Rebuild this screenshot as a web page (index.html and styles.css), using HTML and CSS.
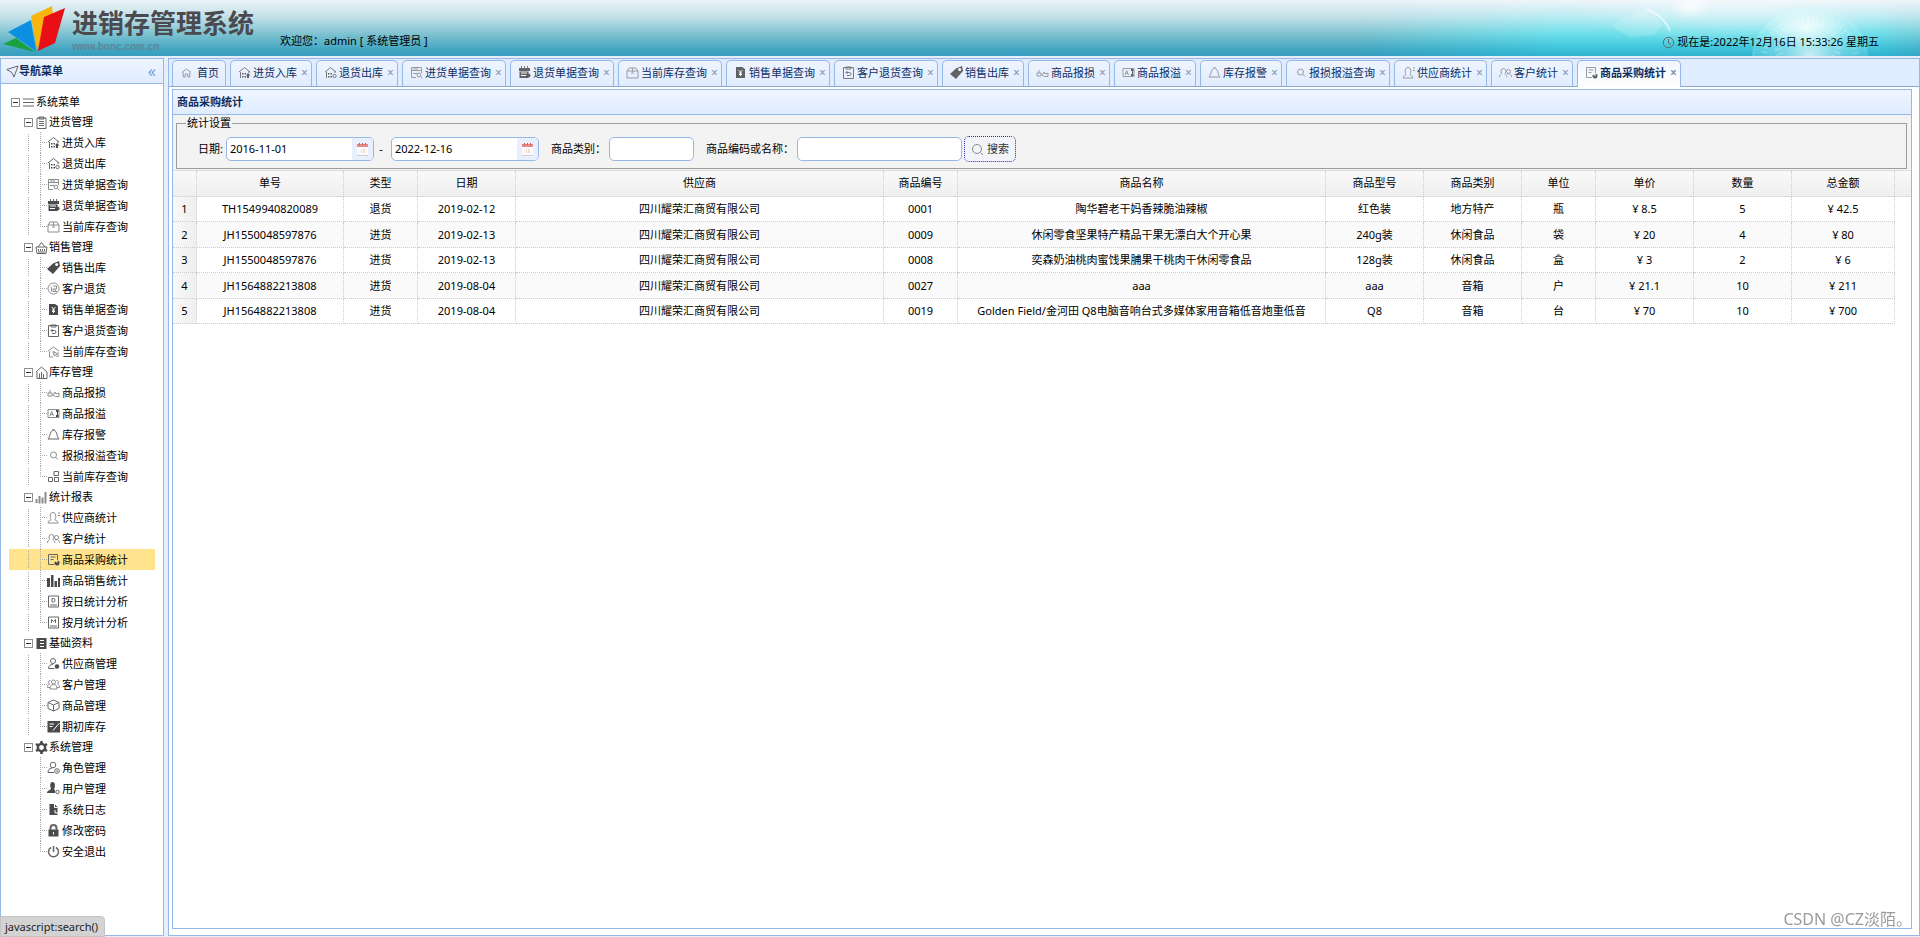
FILE: index.html
```html
<!DOCTYPE html>
<html lang="zh-CN">
<head>
<meta charset="utf-8">
<title>进销存管理系统</title>
<link rel="stylesheet" href="styles.css">
</head>
<body>
<svg class="sprite" aria-hidden="true">
  <symbol id="menu" viewBox="0 0 13 13"><path d="M1 3h11M1 6.500h11M1 10h11"/></symbol>
  <symbol id="clip" viewBox="0 0 13 13"><path d="M2 2h9v10.500H2zM4 1h5v2H4zM4 5.500h5M4 7.500h5M4 9.500h5"/></symbol>
  <symbol id="depot-in" viewBox="0 0 13 13"><path d="M1 6l5.500-4.500L12 6M2.500 6v6M11 5v2"/><path d="M4 7h1.500v1.500H4zM4 10h1.500v1.500H4zM6.500 7H8v1.500H6.500zM6.500 10H8v1.500H6.500zM10 7l2.500 2.500H11V12H9V9.500H8z" class="f"/></symbol>
  <symbol id="depot-out" viewBox="0 0 13 13"><path d="M1 6l5.500-4.500L12 6M2.500 6v6M11 5v2"/><path d="M4 7h1.500v1.500H4zM4 10h1.500v1.500H4zM6.500 7H8v1.500H6.500zM6.500 10H8v1.500H6.500z" class="f"/><circle cx="10.500" cy="10" r="1.700"/></symbol>
  <symbol id="doc-find" viewBox="0 0 13 13"><path d="M6 11.500H1.500v-10h10V7M1.500 4.500h10M3 3h5M3 7.500h4"/><circle cx="9" cy="9" r="1.900"/><path d="M10.500 10.500l2 2"/></symbol>
  <symbol id="cal" viewBox="0 0 13 13"><path d="M1 2h11v3H1zM1.500 5.500h9v6.500h-9z" class="f"/><path d="M3.500 0v3M6.500 0v3M9.500 0v3"/><path d="M3 7h6M3 9.500h5" class="w"/><circle cx="10.500" cy="9.500" r="2" class="f"/></symbol>
  <symbol id="box" viewBox="0 0 13 13"><path d="M1 5l2-3h7l2 3v7H1zM1 5h11M6.500 2v4M5 7h3"/></symbol>
  <symbol id="sale" viewBox="0 0 13 13"><path d="M1 6h11l-1 6.500H2zM3 6l3.500-4.500L10 6M3.500 8v2M5.500 8v2M7.500 8v2M9.500 8v2M3 11h7"/></symbol>
  <symbol id="tag" viewBox="0 0 13 13"><path d="M6 2.500L12 0l1 5-7 8-6-5z" class="f"/><circle cx="9.700" cy="3.500" r="1.500" class="h"/></symbol>
  <symbol id="refund" viewBox="0 0 13 13"><circle cx="6.500" cy="6.500" r="5.500"/><path d="M3.500 4.500l1 1v4M6 4h3.500v3H6v2.500h4M7.500 7l1.500 2"/></symbol>
  <symbol id="yen" viewBox="0 0 13 13"><path d="M2 1h6l3 2v9H2z" class="f"/><path d="M4.500 4l2 2 2-2M6.500 6v4M5 7h3M5 8.500h3" class="w"/></symbol>
  <symbol id="clip-back" viewBox="0 0 13 13"><path d="M1.500 1.500h10v11h-10zM4 1h5v2H4zM5.500 5L4 6.500 5.500 8M4 6.500h3.500a1.500 1.500 0 0 1 0 3H5"/></symbol>
  <symbol id="house-find" viewBox="0 0 13 13"><path d="M1 6l5.500-4L12 6M2.500 6.500V12H6M11 7v5M5 7h3"/><circle cx="8" cy="9" r="1.500"/><path d="M9 10.500l1.500 1.500"/></symbol>
  <symbol id="house" viewBox="0 0 13 13"><path d="M1 6l5.500-5L12 6v6.500H2V6M4.500 12V7.500M6.500 12V6M8.500 12V8"/></symbol>
  <symbol id="home" viewBox="0 0 13 13"><path d="M2 6.500L6.500 3 11 6.500M3.200 6.500V11h2V8h2.600v3h2V6.500"/></symbol>
  <symbol id="loss" viewBox="0 0 13 13"><path d="M1 7h4v3H1zM3 7V4M6 9l2-3 1 2 3-1v3.500H8.500z"/></symbol>
  <symbol id="over" viewBox="0 0 13 13"><path d="M1 2.500h11v8H1zM3 9l1.700-4.500L6.500 9M3.700 7.500h2"/><path d="M9 3h2.500v2H9zM9 8h2.500v2H9zM10 5h1v3h-1z" class="f"/></symbol>
  <symbol id="bell" viewBox="0 0 13 13"><path d="M1 11c2-2 1.500-4.500 3-7 .5-1 1-1.500 2.500-1.500S8.500 3 9 4c1.500 2.500 1 5 3 7zM5.500 2l1-1 1 1"/></symbol>
  <symbol id="find" viewBox="0 0 13 13"><circle cx="6.500" cy="6" r="3"/><path d="M8.700 8.200l2.300 2.300"/></symbol>
  <symbol id="blocks" viewBox="0 0 13 13"><path d="M1.500 7.500h4v4h-4zM7.500 7.500h4v4h-4zM7 1.500h4.500v4H7z"/></symbol>
  <symbol id="chart" viewBox="0 0 13 13"><path d="M1.500 8v4M4.500 5v7.500M7.500 6.500v6M10.500 1v11.500" class="t"/></symbol>
  <symbol id="supply" viewBox="0 0 13 13"><path d="M1 12c0-3 3-2 3-3.500C2.500 6 3 1.500 6 1.500S9.500 6 8 8.500C8 10 11 9 11 12zM11 2h2M11 4.500h2"/></symbol>
  <symbol id="people" viewBox="0 0 13 13"><path d="M.5 11c0-3 2-2.500 2-3.500C1.500 5 2 2.500 4.500 2.500S7.500 5 6 7.500c0 1 1.500 1 2 3.500"/><circle cx="9.500" cy="5.500" r="2"/><path d="M8 8c3-1 4.500.5 4.500 3"/></symbol>
  <symbol id="doc-chart" viewBox="0 0 13 13"><path d="M7 11.500H1.500v-10h9V7M3.500 4h5M3.500 6.500h3"/><path d="M8 8.500a2.500 2.500 0 1 0 2.500-1v2.500z" class="f"/></symbol>
  <symbol id="bars" viewBox="0 0 13 13"><path d="M0 4h3v9H0zM4 1h2.500v12H4zM7.500 7H10v6H7.500zM11 4h2v9h-2z" class="f"/></symbol>
  <symbol id="day" viewBox="0 0 13 13"><path d="M1.500 1h10v11h-10zM3 10h7M5 3.500h1.500Q8 3.500 8 5.200 8 7 6.500 7H5z"/></symbol>
  <symbol id="month" viewBox="0 0 13 13"><path d="M1.500 1h10v11h-10zM3 10h7M4.500 7V3.500l2 2 2-2V7"/></symbol>
  <symbol id="base" viewBox="0 0 13 13"><path d="M1.500 1h10v11h-10z" class="f"/><path d="M5 3.500h4M5 6.500h4M5 9.500h4" class="w"/></symbol>
  <symbol id="user-plus" viewBox="0 0 13 13"><circle cx="6" cy="4" r="2.500"/><path d="M1.500 11.500c0-3 2-4 4.500-4M1.500 11.500h6"/><circle cx="10" cy="9.500" r="2.200" class="f"/></symbol>
  <symbol id="group" viewBox="0 0 13 13"><circle cx="6.500" cy="4" r="2"/><path d="M3 11c0-3 1-4.500 3.500-4.500S10 8 10 11zM3.500 2.500C1.500 2 1 5 2.500 6 .5 7 .5 8 .5 9.500H3M9.500 2.500c2-.5 2.500 2.500 1 3.500 2 1 2 2 2 3.500H10"/></symbol>
  <symbol id="cube" viewBox="0 0 13 13"><path d="M6.500 1L12 3.500v6L6.500 12 1 9.500v-6zM1 3.500L6.500 6 12 3.500M6.500 6v6"/></symbol>
  <symbol id="note" viewBox="0 0 13 13"><path d="M.5 1H13v11.500H.5z" class="f"/><path d="M2.500 4H7M2.500 6.500h3M12.500 3L6 10.500" class="w"/></symbol>
  <symbol id="gear" viewBox="0 0 13 13"><path d="M6.500 2.500l3.500 2v4l-3.500 2-3.500-2v-4z" class="g"/><path d="M6.500 0v3M6.500 10v3M1 3l2.500 1.500M9.500 8.500L12 10M12 3L9.500 4.500M3.500 8.500L1 10" class="g"/></symbol>
  <symbol id="role" viewBox="0 0 13 13"><circle cx="6" cy="4" r="2.800"/><path d="M7 11.500H1C1 9 2 7.500 5 7"/><circle cx="10" cy="10" r="2.300"/><path d="M9 10h2"/></symbol>
  <symbol id="user" viewBox="0 0 13 13"><path d="M5.500 0C2.500 0 3 5 4 6.500 4 8 0 8 0 11h8V8.500L7 7c1.500-2 1.500-7-1.500-7z" class="f"/><circle cx="10.500" cy="10" r="1.700"/></symbol>
  <symbol id="log" viewBox="0 0 13 13"><path d="M2.500 1h5l3 3v8h-8z" class="f"/><path d="M7.500 1v3.500h3M8 7v3h3" class="w"/></symbol>
  <symbol id="lock" viewBox="0 0 13 13"><path d="M1.500 5.500h10v7h-10z" class="f"/><path d="M3.500 6V4a3 3 0 0 1 6 0v2" class="t"/><path d="M6.500 8v2.500" class="w"/></symbol>
  <symbol id="power" viewBox="0 0 13 13"><path d="M4 2.500a5 5 0 1 0 5 0M6.500 1v6" class="p"/></symbol>
  <symbol id="plane" viewBox="0 0 13 13"><path d="M.8 4.500L12 1 8 12 5.800 7.500z"/></symbol>
  <symbol id="clock" viewBox="0 0 13 13"><circle cx="6.500" cy="6.500" r="5.200"/><path d="M6.500 3v4L9 8.500"/></symbol>
  <symbol id="datebox" viewBox="0 0 13 13"><path d="M1 4h11v8H1z" fill="#fbfbfd"/><path d="M1 12h11v1H1z" fill="#cfcfda"/><path d="M1 1h11v3H1z" fill="#e58a88"/><path d="M3 0h1v2H3zM6 0h1v2H6zM9 0h1v2H9z" fill="#c9504e"/><path d="M5 6h1v4H5zM7 6h2v4H7z" fill="#f6dcc8"/></symbol>
</svg>

<header class="top">
  <svg class="top-art" viewBox="0 0 480 56" preserveAspectRatio="none" aria-hidden="true">
    <defs>
      <radialGradient id="globe"><stop offset="0" stop-color="#fff" stop-opacity=".75"/><stop offset=".5" stop-color="#dff" stop-opacity=".35"/><stop offset="1" stop-color="#bff" stop-opacity=".15"/></radialGradient>
      <radialGradient id="glow"><stop offset="0" stop-color="#fff" stop-opacity=".8"/><stop offset="1" stop-color="#fff" stop-opacity="0"/></radialGradient>
    </defs>
    <ellipse cx="300" cy="10" rx="170" ry="34" fill="url(#glow)" opacity=".5"/>
    <ellipse cx="370" cy="56" rx="58" ry="49" fill="url(#globe)"/>
    <ellipse cx="366" cy="28" rx="42" ry="20" fill="url(#glow)"/>
    <ellipse cx="370" cy="56" rx="56" ry="47" fill="none" stroke="#fff" stroke-opacity=".2" stroke-width="3" stroke-dasharray="1 2"/>
    <ellipse cx="370" cy="56" rx="46" ry="38" fill="none" stroke="#fff" stroke-opacity=".18" stroke-width="6" stroke-dasharray="2 3"/>
    <ellipse cx="368" cy="46" rx="30" ry="24" fill="none" stroke="#fff" stroke-opacity=".18" stroke-width="7" stroke-dasharray="3 2"/>
    <path d="M172 26q18-14 38-17l12 16-8 10-24 3z" fill="#fff" fill-opacity=".15"/>
    <path d="M207 9q18 8 23 22" fill="none" stroke="#fff" stroke-opacity=".55" stroke-width="2"/>
    <ellipse cx="250" cy="6" rx="22" ry="14" fill="url(#glow)"/>
  </svg>
  <svg class="logo" viewBox="0 0 64 50" aria-hidden="true">
    <path d="M0 41l13-6 19 14z" fill="#1ba23f"/>
    <path d="M5 29l23-12 5 31z" fill="#0b8fe0"/>
    <path d="M28 13L49 3l1 10-16 34z" fill="#f8b50d"/>
    <path d="M41 14l21-9-10 35-17 8z" fill="#e80f16"/>
  </svg>
  <div class="brand"><h1>进销存管理系统</h1><p>www.bonc.com.cn</p></div>
  <p class="welcome">欢迎您：admin [ 系统管理员 ]</p>
  <p class="now"><svg class="ic"><use href="#clock"/></svg>现在是:2022年12月16日 15:33:26 星期五</p>
</header>

<div class="layout">
  <aside class="side">
    <div class="side-head"><svg class="ic"><use href="#plane"/></svg><h2>导航菜单</h2><button type="button" aria-label="收起">«</button></div>
    <nav class="tree">
      <div class="node root"><i class="hit"></i><svg class="ic"><use href="#menu"/></svg><a href="#">系统菜单</a></div>
      <div class="node"><i class="hit"></i><svg class="ic"><use href="#clip"/></svg><a href="#">进货管理</a></div>
      <ul>
        <li><svg class="ic"><use href="#depot-in"/></svg><a href="#">进货入库</a></li>
        <li><svg class="ic"><use href="#depot-out"/></svg><a href="#">退货出库</a></li>
        <li><svg class="ic lt"><use href="#doc-find"/></svg><a href="#">进货单据查询</a></li>
        <li><svg class="ic"><use href="#cal"/></svg><a href="#">退货单据查询</a></li>
        <li><svg class="ic lt"><use href="#box"/></svg><a href="#">当前库存查询</a></li>
      </ul>
      <div class="node"><i class="hit"></i><svg class="ic"><use href="#sale"/></svg><a href="#">销售管理</a></div>
      <ul>
        <li><svg class="ic"><use href="#tag"/></svg><a href="#">销售出库</a></li>
        <li><svg class="ic lt"><use href="#refund"/></svg><a href="#">客户退货</a></li>
        <li><svg class="ic"><use href="#yen"/></svg><a href="#">销售单据查询</a></li>
        <li><svg class="ic"><use href="#clip-back"/></svg><a href="#">客户退货查询</a></li>
        <li><svg class="ic lt"><use href="#house-find"/></svg><a href="#">当前库存查询</a></li>
      </ul>
      <div class="node"><i class="hit"></i><svg class="ic"><use href="#house"/></svg><a href="#">库存管理</a></div>
      <ul>
        <li><svg class="ic lt"><use href="#loss"/></svg><a href="#">商品报损</a></li>
        <li><svg class="ic lt"><use href="#over"/></svg><a href="#">商品报溢</a></li>
        <li><svg class="ic"><use href="#bell"/></svg><a href="#">库存报警</a></li>
        <li><svg class="ic lt"><use href="#find"/></svg><a href="#">报损报溢查询</a></li>
        <li><svg class="ic"><use href="#blocks"/></svg><a href="#">当前库存查询</a></li>
      </ul>
      <div class="node"><i class="hit"></i><svg class="ic lt"><use href="#chart"/></svg><a href="#">统计报表</a></div>
      <ul>
        <li><svg class="ic lt"><use href="#supply"/></svg><a href="#">供应商统计</a></li>
        <li><svg class="ic lt"><use href="#people"/></svg><a href="#">客户统计</a></li>
        <li class="on"><svg class="ic"><use href="#doc-chart"/></svg><a href="#">商品采购统计</a></li>
        <li><svg class="ic"><use href="#bars"/></svg><a href="#">商品销售统计</a></li>
        <li><svg class="ic"><use href="#day"/></svg><a href="#">按日统计分析</a></li>
        <li><svg class="ic"><use href="#month"/></svg><a href="#">按月统计分析</a></li>
      </ul>
      <div class="node"><i class="hit"></i><svg class="ic"><use href="#base"/></svg><a href="#">基础资料</a></div>
      <ul>
        <li><svg class="ic"><use href="#user-plus"/></svg><a href="#">供应商管理</a></li>
        <li><svg class="ic lt"><use href="#group"/></svg><a href="#">客户管理</a></li>
        <li><svg class="ic"><use href="#cube"/></svg><a href="#">商品管理</a></li>
        <li><svg class="ic"><use href="#note"/></svg><a href="#">期初库存</a></li>
      </ul>
      <div class="node"><i class="hit"></i><svg class="ic"><use href="#gear"/></svg><a href="#">系统管理</a></div>
      <ul class="last">
        <li><svg class="ic"><use href="#role"/></svg><a href="#">角色管理</a></li>
        <li><svg class="ic"><use href="#user"/></svg><a href="#">用户管理</a></li>
        <li><svg class="ic"><use href="#log"/></svg><a href="#">系统日志</a></li>
        <li><svg class="ic"><use href="#lock"/></svg><a href="#">修改密码</a></li>
        <li><svg class="ic"><use href="#power"/></svg><a href="#">安全退出</a></li>
      </ul>
    </nav>
  </aside>

  <main class="main">
    <div class="tabs">
      <div class="tab first"><svg class="ic lt"><use href="#home"/></svg><a href="#">首页</a></div>
      <div class="tab"><svg class="ic"><use href="#depot-in"/></svg><a href="#">进货入库</a><button type="button" aria-label="关闭">×</button></div>
      <div class="tab"><svg class="ic"><use href="#depot-out"/></svg><a href="#">退货出库</a><button type="button" aria-label="关闭">×</button></div>
      <div class="tab"><svg class="ic lt"><use href="#doc-find"/></svg><a href="#">进货单据查询</a><button type="button" aria-label="关闭">×</button></div>
      <div class="tab"><svg class="ic"><use href="#cal"/></svg><a href="#">退货单据查询</a><button type="button" aria-label="关闭">×</button></div>
      <div class="tab"><svg class="ic lt"><use href="#box"/></svg><a href="#">当前库存查询</a><button type="button" aria-label="关闭">×</button></div>
      <div class="tab"><svg class="ic"><use href="#yen"/></svg><a href="#">销售单据查询</a><button type="button" aria-label="关闭">×</button></div>
      <div class="tab"><svg class="ic"><use href="#clip-back"/></svg><a href="#">客户退货查询</a><button type="button" aria-label="关闭">×</button></div>
      <div class="tab"><svg class="ic"><use href="#tag"/></svg><a href="#">销售出库</a><button type="button" aria-label="关闭">×</button></div>
      <div class="tab"><svg class="ic lt"><use href="#loss"/></svg><a href="#">商品报损</a><button type="button" aria-label="关闭">×</button></div>
      <div class="tab"><svg class="ic lt"><use href="#over"/></svg><a href="#">商品报溢</a><button type="button" aria-label="关闭">×</button></div>
      <div class="tab"><svg class="ic lt"><use href="#bell"/></svg><a href="#">库存报警</a><button type="button" aria-label="关闭">×</button></div>
      <div class="tab"><svg class="ic lt"><use href="#find"/></svg><a href="#">报损报溢查询</a><button type="button" aria-label="关闭">×</button></div>
      <div class="tab"><svg class="ic lt"><use href="#supply"/></svg><a href="#">供应商统计</a><button type="button" aria-label="关闭">×</button></div>
      <div class="tab"><svg class="ic lt"><use href="#people"/></svg><a href="#">客户统计</a><button type="button" aria-label="关闭">×</button></div>
      <div class="tab active"><svg class="ic lt"><use href="#doc-chart"/></svg><a href="#">商品采购统计</a><button type="button" aria-label="关闭">×</button></div>
    </div>
    <div class="content">
      <section class="panel">
        <h2 class="panel-title">商品采购统计</h2>
        <form class="toolbar">
          <fieldset>
            <legend>统计设置</legend>
            <div class="fields">
              <label for="from">日期:</label>
              <span class="date"><input id="from" type="text" value="2016-11-01"><button type="button" aria-label="选择日期"><svg class="cal-ic"><use href="#datebox"/></svg></button></span>
              <span class="dash">-</span>
              <span class="date"><input id="to" type="text" value="2022-12-16" aria-label="结束日期"><button type="button" aria-label="选择日期"><svg class="cal-ic"><use href="#datebox"/></svg></button></span>
              <label class="next" for="type">商品类别：</label>
              <input class="box type" id="type" type="text">
              <label class="next" for="name">商品编码或名称：</label>
              <input class="box name" id="name" type="text">
              <button class="search" type="button"><svg viewBox="0 0 13 13"><circle cx="6" cy="6" r="4.500"/><path d="M9.500 9.500l2.500 2.500"/></svg>搜索</button>
            </div>
          </fieldset>
        </form>
        <table>
          <colgroup><col class="w-no"><col class="w-bill"><col class="w-s"><col class="w-m"><col class="w-l"><col class="w-s"><col class="w-l"><col class="w-m"><col class="w-m"><col class="w-s"><col class="w-m"><col class="w-m"><col class="w-sum"><col></colgroup>
          <thead><tr><th></th><th>单号</th><th>类型</th><th>日期</th><th>供应商</th><th>商品编号</th><th>商品名称</th><th>商品型号</th><th>商品类别</th><th>单位</th><th>单价</th><th>数量</th><th>总金额</th><th></th></tr></thead>
          <tbody>
            <tr><td>1</td><td>TH1549940820089</td><td>退货</td><td>2019-02-12</td><td>四川耀荣汇商贸有限公司</td><td>0001</td><td>陶华碧老干妈香辣脆油辣椒</td><td>红色装</td><td>地方特产</td><td>瓶</td><td>¥ 8.5</td><td>5</td><td>¥ 42.5</td><td></td></tr>
            <tr><td>2</td><td>JH1550048597876</td><td>进货</td><td>2019-02-13</td><td>四川耀荣汇商贸有限公司</td><td>0009</td><td>休闲零食坚果特产精品干果无漂白大个开心果</td><td>240g装</td><td>休闲食品</td><td>袋</td><td>¥ 20</td><td>4</td><td>¥ 80</td><td></td></tr>
            <tr><td>3</td><td>JH1550048597876</td><td>进货</td><td>2019-02-13</td><td>四川耀荣汇商贸有限公司</td><td>0008</td><td>奕森奶油桃肉蜜饯果脯果干桃肉干休闲零食品</td><td>128g装</td><td>休闲食品</td><td>盒</td><td>¥ 3</td><td>2</td><td>¥ 6</td><td></td></tr>
            <tr><td>4</td><td>JH1564882213808</td><td>进货</td><td>2019-08-04</td><td>四川耀荣汇商贸有限公司</td><td>0027</td><td>aaa</td><td>aaa</td><td>音箱</td><td>户</td><td>¥ 21.1</td><td>10</td><td>¥ 211</td><td></td></tr>
            <tr><td>5</td><td>JH1564882213808</td><td>进货</td><td>2019-08-04</td><td>四川耀荣汇商贸有限公司</td><td>0019</td><td>Golden Field/金河田 Q8电脑音响台式多媒体家用音箱低音炮重低音</td><td>Q8</td><td>音箱</td><td>台</td><td>¥ 70</td><td>10</td><td>¥ 700</td><td></td></tr>
          </tbody>
        </table>
      </section>
    </div>
  </main>
</div>
<div class="status">javascript:search()</div>
<div class="mark">CSDN @CZ淡陌。</div>
</body>
</html>
```
FILE: styles.css
```css
* { box-sizing: border-box; }
body {
  margin: 0;
  height: 100vh;
  display: flex;
  flex-direction: column;
  overflow: hidden;
  background: #e6eef8;
  color: #000;
  font: 11px/16px "Noto Sans", "Noto Sans CJK SC", sans-serif;
}
h1, h2, p, ul { margin: 0; padding: 0; }
ul { list-style: none; }
a { color: inherit; text-decoration: none; }
button, input { font: inherit; color: inherit; padding: 0; }
button { border: 0; background: none; cursor: pointer; }

.sprite { position: absolute; width: 0; height: 0; }
.ic { width: 13px; height: 13px; flex: none; fill: none; stroke: #666; stroke-width: 1; }
.ic.lt { stroke: #8c8c8c; }
.f { fill: #4a4a4a; stroke: none; }
.w { stroke: #fff; fill: none; }
.h { fill: #fff; stroke: none; }
.t { stroke-width: 2; }
.p { stroke-width: 1.5; }
.g { stroke-width: 2.5; stroke: #4a4a4a; }

/* header */
.top {
  position: relative;
  flex: none;
  height: 56px;
  display: flex;
  align-items: flex-start;
  background: linear-gradient(#ebf3f8 0%, #c3e0e8 30%, #7fc3d0 60%, #3fa4c1 90%, #389dbf 100%);
}
.top::before {
  content: "";
  position: absolute;
  inset: 0 0 0 auto;
  width: 560px;
  background: linear-gradient(#f0f5fa 0%, #b9ebf2 30%, #6fdfea 60%, #3fc6dc 85%, #2fb4d2 100%);
  mask-image: linear-gradient(90deg, transparent 0%, #000 35%, #000 92%, rgba(0, 0, 0, .4) 100%);
}
.top-art { position: absolute; right: 0; top: 0; width: 480px; height: 56px; }
.logo { position: relative; width: 64px; height: 50px; margin: 3px 0 0 3px; }
.brand { position: relative; margin: 7px 0 0 5px; width: 208px; color: #4a4a50; }
.brand h1 { font-size: 26px; line-height: 32px; font-weight: 700; }
.brand p { font: bold 10px/16px "Liberation Sans", sans-serif; color: #5d8797; }
.welcome { position: relative; margin-top: 33px; }
.now { position: relative; display: flex; align-items: center; gap: 2px; margin: 34px 41px 0 auto; }

/* layout */
.layout { flex: 1; min-height: 0; display: flex; gap: 4px; padding: 2px 0 1px; }
.side { width: 164px; flex: none; display: flex; flex-direction: column; background: #fff; border: 1px solid #95b8e7; }
.side-head {
  display: flex;
  align-items: center;
  height: 25px;
  padding: 0 7px 0 5px;
  background: linear-gradient(#eff5ff, #e0ecff);
  border-bottom: 1px solid #95b8e7;
}
.side-head h2, .panel-title { font-size: 11px; line-height: 16px; font-weight: 700; color: #0e2d5f; }
.side-head button { margin-left: auto; color: #6a9be0; font-size: 16px; line-height: 16px; }

.tree { padding: 8px; }
.node, .tree li { display: flex; align-items: center; }
.node { height: 20px; padding-left: 14px; }
.node.root { padding-left: 1px; }
.node .ic { margin: 0 1px 0 2px; }
.hit {
  width: 9px;
  height: 9px;
  margin-left: 1px;
  border: 1px solid #8f8f8f;
  background: linear-gradient(#333, #333) center / 5px 1px no-repeat;
}
.tree li {
  height: 21px;
  padding-left: 38px;
  gap: 2px;
  background:
    repeating-linear-gradient(#aaa 0 1px, transparent 1px 2px) 19px 2px / 1px 17px no-repeat,
    repeating-linear-gradient(#aaa 0 1px, transparent 1px 2px) 31px 0 / 1px 100% no-repeat,
    repeating-linear-gradient(90deg, #aaa 0 1px, transparent 1px 2px) 31px 10px / 7px 1px no-repeat;
}
.tree li:last-child { background-size: 1px 17px, 1px 10px, 7px 1px; }
.tree .last li {
  background:
    repeating-linear-gradient(#aaa 0 1px, transparent 1px 2px) 31px 0 / 1px 100% no-repeat,
    repeating-linear-gradient(90deg, #aaa 0 1px, transparent 1px 2px) 31px 10px / 7px 1px no-repeat;
}
.tree .last li:last-child { background-size: 1px 10px, 7px 1px; }
.tree li.on { background-color: #ffe48d; }

/* tabs */
.main { flex: 1; min-width: 0; display: flex; flex-direction: column; border: 1px solid #95b8e7; background: #fff; }
.tabs {
  flex: none;
  display: flex;
  align-items: flex-end;
  gap: 4px;
  height: 28px;
  padding: 0 3px;
  background: #e0ecff;
  border-bottom: 1px solid #8ba9cf;
}
.tab {
  display: flex;
  align-items: center;
  height: 26px;
  padding: 0 4px 2px 7px;
  color: #0e2d5f;
  white-space: nowrap;
  background: linear-gradient(#eff5ff, #e0ecff);
  border: 1px solid #95b8e7;
  border-bottom: 0;
  border-radius: 5px 5px 0 0;
}
.tab .ic { margin-right: 2px; opacity: .85; }
.tab button { width: 6px; margin-left: 4px; color: #7d93b5; font-size: 12px; line-height: 16px; }
.tab.first { padding-right: 6px; }
.tab.first .ic { margin-right: 4px; }
.tab.active { height: 27px; padding-bottom: 3px; margin-bottom: -1px; background: linear-gradient(#eff5ff, #fff); font-weight: 700; }
.content { flex: 1; min-height: 0; display: flex; padding: 2px 7px 6px 3px; }
.panel { flex: 1; min-width: 0; border: 1px solid #95b8e7; }
.panel-title {
  height: 25px;
  padding: 4px;
  background: linear-gradient(#eff5ff, #e0ecff);
  border-bottom: 1px solid #95b8e7;
}

/* filter */
.toolbar { padding: 0 4px 1px 3px; background: #f3f3f3; border-bottom: 1px solid #ddd; }
fieldset { margin: 0; padding: 5px 21px 6px; min-width: 0; border: 1px solid #9c9c9c; }
legend { margin-left: -12px; padding: 0 1px; }
.fields { display: flex; align-items: center; height: 26px; }
.date { display: flex; width: 148px; height: 24px; margin-left: 3px; background: #fff; border: 1px solid #95b8e7; border-radius: 5px; overflow: hidden; }
.date input { flex: 1; min-width: 0; padding-left: 3px; border: 0; background: none; outline: 0; }
.date button { width: 21px; display: grid; place-items: center; background: #e8f0fd; }
.cal-ic { width: 13px; height: 13px; }
.dash { width: 14px; text-align: center; }
.next { margin-left: 12px; }
.box { height: 24px; margin-left: 3px; background: #fff; border: 1px solid #95b8e7; border-radius: 5px; }
.type { width: 85px; }
.name { width: 165px; }
.search {
  display: flex;
  align-items: center;
  gap: 3px;
  height: 26px;
  margin-left: 2px;
  padding: 0 6px;
  color: #333;
  background: #f3f4fa;
  border: 1px dotted #2a2ab8;
  border-radius: 5px;
}
.search svg { width: 13px; height: 13px; fill: none; stroke: #8a8a8a; }

/* grid */
table { width: 100%; table-layout: fixed; border-collapse: separate; border-spacing: 0; }
.w-no { width: 24px; }
.w-bill { width: 147px; }
.w-s { width: 74px; }
.w-m { width: 98px; }
.w-l { width: 368px; }
.w-sum { width: 103px; }
th, td { padding: 0; text-align: center; font-weight: 400; white-space: nowrap; border-right: 1px dotted #ccc; border-bottom: 1px dotted #ccc; }
th { height: 26px; padding-bottom: 1px; background: linear-gradient(#f9f9f9, #efefef); border-bottom: 1px solid #ddd; }
td { height: 25px; background: #fff; }
tr:nth-child(even) td { height: 26px; background: #fafafa; }
td:first-child, tr:nth-child(even) td:first-child { background: linear-gradient(90deg, #f8f8f8, #efefef); }
th:last-child { border-right: 0; }
td:last-child, tr:nth-child(even) td:last-child { border: 0; background: #fff; }

.status {
  position: fixed;
  left: 0;
  bottom: 0;
  padding: 2px 6px 1px 4px;
  color: #222;
  background: #d3d3d3;
  border: 1px solid #c4c4c4;
  border-radius: 0 4px 0 0;
}
.mark { position: fixed; right: 8px; bottom: 6px; color: #9a9a9a; font-size: 16px; line-height: 24px; }
```
